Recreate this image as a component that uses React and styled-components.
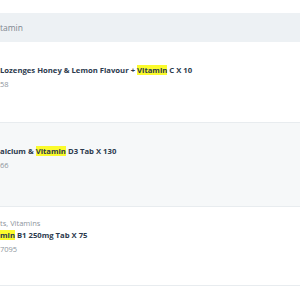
import React from "react";
import styled, { createGlobalStyle } from "styled-components";

const Global = createGlobalStyle`
  html, body { margin: 0; padding: 0; background: #ffffff; overflow: hidden; }
  body { font-family: "Open Sans", "Liberation Sans", sans-serif; }
`;

const Page = styled.div`
  width: 300px;
  height: 300px;
  padding-top: 13px;
  box-sizing: border-box;
  overflow: hidden;
`;

const SearchBar = styled.div`
  height: 29px;
  background: #edf1f4;
  display: flex;
  align-items: center;
  font-size: 8.5px;
  color: #7f8790;
  white-space: nowrap;
`;

const List = styled.div`
  display: flex;
  flex-direction: column;
`;

const Row = styled.div`
  height: ${(p) => p.$h}px;
  box-sizing: border-box;
  background: ${(p) => (p.$alt ? "#f6f8f9" : "#ffffff")};
  border-bottom: 1px solid #e8ecef;
  padding-top: 10px;
  display: flex;
  flex-direction: column;
  white-space: nowrap;
`;

const Category = styled.div`
  height: 12px;
  line-height: 12px;
  font-size: 7.5px;
  color: #8e959d;
`;

const Title = styled.div`
  line-height: 12px;
  font-size: 7.7px;
  font-weight: 700;
  color: #2c3a4d;
`;

const Code = styled.div`
  margin-top: 2px;
  line-height: 12px;
  font-size: 7.5px;
  color: #8e959d;
`;

const Mark = styled.span`
  background: #fbfb2c;
`;

const rows = [
  { h: 81, cat: "", pre: "Lozenges Honey & Lemon Flavour + ", post: " C X 10", code: "58" },
  { h: 84, alt: true, cat: "", pre: "alcium & ", post: " D3 Tab X 130", code: "66" },
  { h: 79, cat: "ts, Vitamins", pre: "", mark: "min", post: " B1 250mg Tab X 75", code: "7095" },
];

export default function App() {
  return (
    <Page>
      <Global />
      <SearchBar>tamin</SearchBar>
      <List>
        {rows.map((r, i) => (
          <Row key={i} $h={r.h} $alt={r.alt}>
            <Category>{r.cat}</Category>
            <Title>
              {r.pre}
              <Mark>{r.mark || "Vitamin"}</Mark>
              {r.post}
            </Title>
            <Code>{r.code}</Code>
          </Row>
        ))}
      </List>
    </Page>
  );
}
